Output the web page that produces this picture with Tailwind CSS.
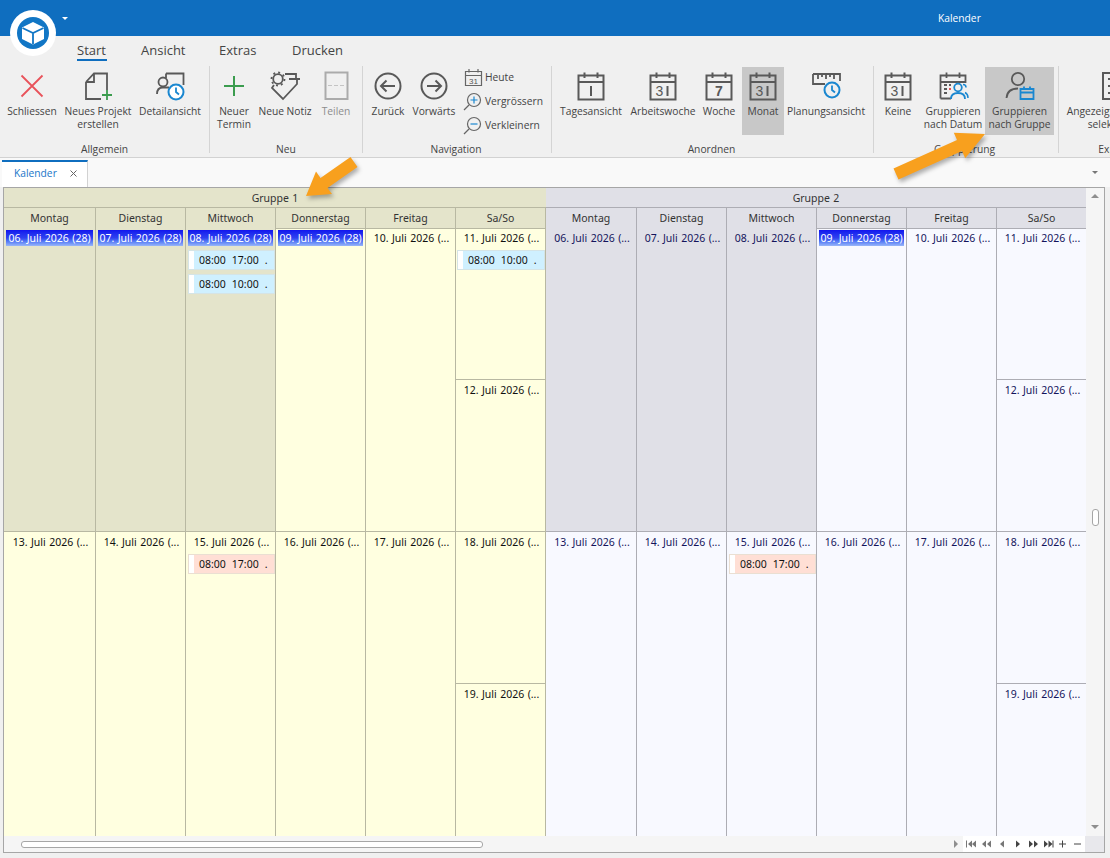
<!DOCTYPE html>
<html lang="de">
<head>
  <meta charset="UTF-8" />
  <title>Kalender</title>
  <script src="https://cdn.jsdelivr.net/npm/@tailwindcss/browser@4"></script>
</head>
<body class="bg-[#f0f0f0]">
<div class="relative w-[1110px] h-[858px] overflow-hidden bg-[#f0f0f0] font-['Open_Sans',sans-serif] text-[#444]">

  <svg class="hidden">
    <symbol id="cal" viewBox="0 0 32 32">
      <path d="M3.5 5.5H28.5V29.5H3.5ZM3.5 12H28.5M9.5 2.5V8M22.5 2.5V8" fill="none" stroke="#595959" stroke-width="2"/>
    </symbol>
    <symbol id="cal31" viewBox="0 0 32 32">
      <path d="M3.5 5.5H28.5V29.5H3.5ZM3.5 12H28.5M9.5 2.5V8M22.5 2.5V8M20.500 16V26" fill="none" stroke="#595959" stroke-width="2"/>
      <text x="12.500" y="26" text-anchor="middle" font-size="14" fill="#595959" font-family="Liberation Sans">3</text>
    </symbol>
  </svg>

  <!-- Titelleiste -->
  <div class="h-9 bg-[#0f6ebf] flex items-center text-white text-[10.25px] pt-px">
    <span class="ml-[938px]">Kalender</span>
  </div>

  <!-- Logo -->
  <div class="absolute left-[10px] top-[10px] w-[46px] h-[46px] rounded-full bg-white flex items-center justify-center">
    <svg width="32" height="32" viewBox="0 0 32 32">
      <circle cx="16" cy="16" r="16" fill="#1176c5"/>
      <path d="M16 5L27 10.500V22L16 27.500L5 22V10.500Z" fill="#fff"/>
      <path d="M5.500 11L16 16L26.500 11M16 16V27" fill="none" stroke="#1176c5" stroke-width="1.800"/>
    </svg>
  </div>
  <div class="absolute left-[62px] top-[17px] w-0 h-0 border-x-[3px] border-x-transparent border-t-[3px] border-t-white"></div>

  <!-- Ribbon Tabs -->
  <div class="h-[30px] flex text-[13px] leading-[28px] pl-[77px]">
    <div class="w-[64px]"><span class="inline-block w-[30px] h-[25px] border-b-[2px] border-[#0f6ebf] leading-[28px]">Start</span></div>
    <div class="w-[78px]">Ansicht</div>
    <div class="w-[73px]">Extras</div>
    <div>Drucken</div>
  </div>

  <!-- Ribbon -->
  <div class="h-[92px] flex text-[10.25px] leading-[13px] text-center border-b border-[#d2d2d2]">

    <div class="w-[210px] shrink-0 h-[87px] border-r border-[#d4d4d4] flex flex-col">
      <div class="h-[69px] shrink-0 pt-px pl-[4px] flex">
        <div class="w-[56px] flex flex-col items-center">
          <svg class="mt-[3px] mb-[3px]" width="32" height="32" viewBox="0 0 32 32"><path d="M5.5 5.5L26.5 26.5M26.5 5.5L5.5 26.5" stroke="#e8525a" stroke-width="1.8"/></svg>
          <span>Schliessen</span>
        </div>
        <div class="w-[76px] flex flex-col items-center">
          <svg class="mt-[3px] mb-[3px]" width="32" height="32" viewBox="0 0 32 32"><path d="M4 12L12 3.5H25V20M4 12H12V3.5M4 12V29H19" fill="none" stroke="#595959" stroke-width="1.8"/><path d="M25 20V30M20 25H30" stroke="#3b9c4e" stroke-width="1.8"/></svg>
          <span>Neues Projekt erstellen</span>
        </div>
        <div class="w-[68px] flex flex-col items-center">
          <svg class="mt-[3px] mb-[3px]" width="32" height="32" viewBox="0 0 32 32"><path d="M12 3.5H29.5V15M12 3.5V8" fill="none" stroke="#595959" stroke-width="1.8"/><circle cx="9" cy="12" r="4.5" fill="none" stroke="#595959" stroke-width="1.8"/><path d="M3 24C3 19 6 17.500 9 17.500H15" fill="none" stroke="#595959" stroke-width="1.8"/><circle cx="22" cy="22" r="7.500" fill="#fff" stroke="#1a87d0" stroke-width="2"/><path d="M22 17.500V22L25 24.500" fill="none" stroke="#1a87d0" stroke-width="1.8"/></svg>
          <span>Detailansicht</span>
        </div>
      </div>
      <div class="mt-[8px]">Allgemein</div>
    </div>

    <div class="w-[153px] shrink-0 h-[87px] border-r border-[#d4d4d4] flex flex-col">
      <div class="h-[69px] shrink-0 pt-px flex">
        <div class="w-[48px] flex flex-col items-center">
          <svg class="mt-[3px] mb-[3px]" width="32" height="32" viewBox="0 0 32 32"><path d="M16 6V26M6 16H26" stroke="#3b9c4e" stroke-width="2"/></svg>
          <span>Neuer Termin</span>
        </div>
        <div class="w-[54px] flex flex-col items-center">
          <svg class="mt-[3px] mb-[3px]" width="32" height="32" viewBox="0 0 32 32"><circle cx="9" cy="9" r="4.800" fill="none" stroke="#595959" stroke-width="1.800"/><circle cx="9" cy="9" r="6.500" fill="none" stroke="#595959" stroke-width="1.800" stroke-dasharray="2 3"/><path d="M5 15L3 18L14 29L28 14V9M16 4H27V9M20 9H31" fill="none" stroke="#595959" stroke-width="1.800"/></svg>
          <span class="whitespace-nowrap">Neue Notiz</span>
        </div>
        <div class="w-[48px] flex flex-col items-center text-[#8c8c8c]">
          <svg class="mt-[3px] mb-[3px]" width="32" height="32" viewBox="0 0 32 32"><path d="M5.500 2.500H27.500V29H5.500Z" fill="none" stroke="#ababab" stroke-width="2"/><path d="M8 15.500H25" stroke="#c4c4c4" stroke-dasharray="4 2"/></svg>
          <span>Teilen</span>
        </div>
      </div>
      <div class="mt-[8px]">Neu</div>
    </div>

    <div class="w-[189px] shrink-0 h-[87px] border-r border-[#d4d4d4] flex flex-col">
      <div class="h-[69px] shrink-0 pt-px pl-[2px] flex">
        <div class="w-[46px] flex flex-col items-center">
          <svg class="mt-[3px] mb-[3px]" width="32" height="32" viewBox="0 0 32 32"><circle cx="16" cy="16" r="12.500" fill="none" stroke="#595959" stroke-width="2"/><path d="M9.500 16H23M14.500 10.500L9 16L14.500 21.500" fill="none" stroke="#595959" stroke-width="2"/></svg>
          <span>Zurück</span>
        </div>
        <div class="w-[46px] flex flex-col items-center">
          <svg class="mt-[3px] mb-[3px]" width="32" height="32" viewBox="0 0 32 32"><circle cx="16" cy="16" r="12.500" fill="none" stroke="#595959" stroke-width="2"/><path d="M9 16H22.500M17.500 10.500L23 16L17.500 21.500" fill="none" stroke="#595959" stroke-width="2"/></svg>
          <span>Vorwärts</span>
        </div>
        <div class="ml-[6px] flex flex-col gap-1 text-left">
          <div class="h-5 flex items-center gap-[2px]">
            <svg width="20" height="20" viewBox="0 0 20 20"><path d="M2.500 4.500H18.500V18.500H2.500ZM2.500 8.500H18.500M6 2V5.500M15 2V5.500" fill="none" stroke="#666" stroke-width="1.200"/><text x="10.500" y="16.500" text-anchor="middle" font-size="8" fill="#555" font-family="Liberation Sans">31</text></svg>
            <span>Heute</span>
          </div>
          <div class="h-5 flex items-center gap-[2px]">
            <svg width="20" height="20" viewBox="0 0 20 20"><circle cx="11" cy="9" r="6.500" fill="none" stroke="#666" stroke-width="1.200"/><path d="M6 14L1 19" stroke="#666" stroke-width="1.200"/><path d="M11 5.500V12.500M7.500 9H14.500" stroke="#1a87d0" stroke-width="1.200"/></svg>
            <span>Vergrössern</span>
          </div>
          <div class="h-5 flex items-center gap-[2px]">
            <svg width="20" height="20" viewBox="0 0 20 20"><circle cx="11" cy="9" r="6.500" fill="none" stroke="#666" stroke-width="1.200"/><path d="M6 14L1 19" stroke="#666" stroke-width="1.200"/><path d="M7.500 9H14.500" stroke="#1a87d0" stroke-width="1.200"/></svg>
            <span>Verkleinern</span>
          </div>
        </div>
      </div>
      <div class="mt-[8px] pr-[2px]">Navigation</div>
    </div>

    <div class="w-[322px] shrink-0 h-[87px] border-r border-[#d4d4d4] flex flex-col">
      <div class="h-[69px] shrink-0 pt-px flex">
        <div class="w-[78px] flex flex-col items-center">
          <svg class="mt-[3px] mb-[3px]" width="32" height="32" viewBox="0 0 32 32"><use href="#cal"/><path d="M16 16V26" stroke="#595959" stroke-width="2"/></svg>
          <span>Tagesansicht</span>
        </div>
        <div class="w-[66px] flex flex-col items-center">
          <svg class="mt-[3px] mb-[3px]" width="32" height="32" viewBox="0 0 32 32"><use href="#cal31"/></svg>
          <span>Arbeitswoche</span>
        </div>
        <div class="w-[46px] flex flex-col items-center">
          <svg class="mt-[3px] mb-[3px]" width="32" height="32" viewBox="0 0 32 32"><use href="#cal"/><text x="16" y="26" text-anchor="middle" font-size="14" font-weight="bold" fill="#595959" font-family="Liberation Sans">7</text></svg>
          <span>Woche</span>
        </div>
        <div class="w-[42px] h-[68px] bg-[#c8c8c8] flex flex-col items-center">
          <svg class="mt-[3px] mb-[3px]" width="32" height="32" viewBox="0 0 32 32"><use href="#cal31"/></svg>
          <span>Monat</span>
        </div>
        <div class="w-[84px] flex flex-col items-center">
          <svg class="mt-[3px] mb-[3px]" width="32" height="32" viewBox="0 0 32 32"><path d="M3 4H30V11M3 4V14H15M8 4V9M12 4V7M16 4V9M20 4V7M24 4V9" fill="none" stroke="#595959" stroke-width="1.800"/><circle cx="22" cy="20" r="7.500" fill="#f0f0f0" stroke="#1a87d0" stroke-width="2"/><path d="M22 15.500V20L25 22.500" fill="none" stroke="#1a87d0" stroke-width="1.800"/></svg>
          <span class="whitespace-nowrap">Planungsansicht</span>
        </div>
      </div>
      <div class="mt-[8px] pr-[2px]">Anordnen</div>
    </div>

    <div class="w-[185px] shrink-0 h-[87px] border-r border-[#d4d4d4] flex flex-col">
      <div class="h-[69px] shrink-0 pt-px pl-px flex">
        <div class="w-[46px] flex flex-col items-center">
          <svg class="mt-[3px] mb-[3px]" width="32" height="32" viewBox="0 0 32 32"><use href="#cal31"/></svg>
          <span>Keine</span>
        </div>
        <div class="w-[64px] flex flex-col items-center">
          <svg class="mt-[3px] mb-[3px]" width="32" height="32" viewBox="0 0 32 32"><path d="M3.500 28.500V5.500H28.500V13M3.500 28.500H14M3.500 12H28.500M9.500 2.500V8M22.500 2.500V8" fill="none" stroke="#595959" stroke-width="1.800"/><path d="M7 15H10M7 19H10M7 23H10M12 15H14" stroke="#595959" stroke-width="2"/><path d="M12 19H14" stroke="#e8525a" stroke-width="2"/><circle cx="21" cy="17.500" r="3.800" fill="#f0f0f0" stroke="#1a87d0" stroke-width="1.800"/><path d="M14 29C14 24.500 17 23 21 23C25 23 28 24.500 28 29" fill="none" stroke="#1a87d0" stroke-width="1.800"/><path d="M26 14.500C28 14.500 29 16 29 17.500M28 22.500C30 23.500 31 25.500 31 28" fill="none" stroke="#1a87d0" stroke-width="1.500"/></svg>
          <span>Gruppieren nach Datum</span>
        </div>
        <div class="w-[69px] h-[68px] bg-[#c8c8c8] flex flex-col items-center">
          <svg class="mt-[3px] mb-[3px]" width="32" height="32" viewBox="0 0 32 32"><circle cx="14" cy="9" r="6.200" fill="none" stroke="#595959" stroke-width="1.800"/><path d="M2.500 28C3 22 7 18.500 14 18.500" fill="none" stroke="#595959" stroke-width="1.800"/><path d="M16.500 19H29.500V29H16.500ZM16.500 22.500H29.500M20 16.500V20M26 16.500V20" fill="none" stroke="#1a87d0" stroke-width="1.800"/></svg>
          <span>Gruppieren nach Gruppe</span>
        </div>
      </div>
      <div class="mt-[8px] pr-[3px]">Gruppierung</div>
    </div>

    <div class="w-[112px] shrink-0 h-[87px] flex flex-col">
      <div class="h-[69px] shrink-0 pt-px pl-[5px] flex">
        <div class="w-[100px] shrink-0 flex flex-col items-center">
          <svg class="mt-[3px] mb-[3px]" width="32" height="32" viewBox="0 0 32 32"><path d="M5 3H27V29H5ZM10 9H13M10 16H13M10 23H13" fill="none" stroke="#595959" stroke-width="2"/></svg>
          <span class="whitespace-nowrap">Angezeigte Termine</span>
          <span>selektieren</span>
        </div>
      </div>
      <div class="mt-[8px] pl-[5px] w-[105px]">Export</div>
    </div>
  </div>

  <!-- Dokument-Tab -->
  <div class="h-[29px] bg-[#f9f9f9] flex justify-between">
    <div class="ml-[2px] mt-[2px] w-[86px] h-[27px] pb-[2px] bg-white border-t-2 border-t-[#0f6ebf] border-r border-r-[#d2d2d2] flex items-center text-[10.25px] text-[#1a76c9]">
      <span class="ml-[12px]">Kalender</span>
      <svg class="ml-[13px]" width="7" height="7" viewBox="0 0 7 7"><path d="M0.500 0.500L6.500 6.500M6.500 0.500L0.500 6.500" stroke="#666"/></svg>
    </div>
    <div class="mr-[12px] mt-[13px] w-0 h-0 border-x-[3px] border-x-transparent border-t-[3px] border-t-[#777]"></div>
  </div>

  <!-- Kalender -->
  <div class="ml-[3px] w-[1102px] h-[666px] border border-[#a6a6a6] bg-[#f5f5f5] font-['Noto_Sans',sans-serif] text-[10.5px] leading-[14px] text-center [word-spacing:0.7px]">
    <div class="flex h-[648px]">

      <!-- Gruppe 1 -->
      <div class="w-[542px] shrink-0 bg-[#ffffe0] text-[#111]">
        <div class="h-5 bg-[#e4e4cb] border-b border-[#b8b8a2] flex items-center justify-center text-[#333]">Gruppe 1</div>
        <div class="grid grid-cols-[92px_90px_90px_90px_90px_90px] h-5 bg-[#e4e4cb] text-[#333]">
          <div class="border-r border-b border-[#b8b8a2] leading-5">Montag</div>
          <div class="border-r border-b border-[#b8b8a2] leading-5">Dienstag</div>
          <div class="border-r border-b border-[#b8b8a2] leading-5">Mittwoch</div>
          <div class="border-r border-b border-[#b8b8a2] leading-5">Donnerstag</div>
          <div class="border-r border-b border-[#b8b8a2] leading-5">Freitag</div>
          <div class="border-r border-b border-[#b8b8a2] leading-5">Sa/So</div>
        </div>
        <div class="grid grid-cols-[92px_90px_90px_90px_90px_90px] h-[304px]">
          <div class="border-r border-b border-[#b8b8a2] bg-[#e4e4cb] pt-[2px]"><div class="mx-[2px] h-4 leading-4 whitespace-nowrap text-white bg-gradient-to-b from-[#1212ee] via-[#3040f0] to-[#9ab6f8]">06. Juli 2026 (28)</div></div>
          <div class="border-r border-b border-[#b8b8a2] bg-[#e4e4cb] pt-[2px]"><div class="mx-[2px] h-4 leading-4 whitespace-nowrap text-white bg-gradient-to-b from-[#1212ee] via-[#3040f0] to-[#9ab6f8]">07. Juli 2026 (28)</div></div>
          <div class="border-r border-b border-[#b8b8a2] bg-[#e4e4cb] pt-[2px]">
            <div class="mx-[2px] h-4 leading-4 whitespace-nowrap text-white bg-gradient-to-b from-[#1212ee] via-[#3040f0] to-[#9ab6f8]">08. Juli 2026 (28)</div>
            <div class="mt-1 ml-[2px] h-5 flex bg-[#cff0ff] border border-[#d5e4e6] items-center">
              <div class="w-[5px] h-full bg-white"></div><div class="flex gap-[6px] pl-[5px]"><span>08:00</span><span>17:00</span><span>.</span></div>
            </div>
            <div class="mt-1 ml-[2px] h-5 flex bg-[#cff0ff] border border-[#d5e4e6] items-center">
              <div class="w-[5px] h-full bg-white"></div><div class="flex gap-[6px] pl-[5px]"><span>08:00</span><span>10:00</span><span>.</span></div>
            </div>
          </div>
          <div class="border-r border-b border-[#b8b8a2] pt-[2px]"><div class="mx-[2px] h-4 leading-4 whitespace-nowrap text-white bg-gradient-to-b from-[#1212ee] via-[#3040f0] to-[#9ab6f8]">09. Juli 2026 (28)</div></div>
          <div class="border-r border-b border-[#b8b8a2] pt-[2px] pl-[2px] leading-4">10. Juli 2026 (...</div>
          <div class="border-r border-b border-[#b8b8a2] flex flex-col">
            <div class="h-[152px] border-b border-[#b8b8a2] pt-[2px]">
              <div class="pl-[2px] leading-4">11. Juli 2026 (...</div>
              <div class="mt-1 ml-px h-5 flex bg-[#cff0ff] border border-[#d5e4e6] items-center">
                <div class="w-[5px] h-full bg-white"></div><div class="flex gap-[6px] pl-[5px]"><span>08:00</span><span>10:00</span><span>.</span></div>
              </div>
            </div>
            <div class="pt-[2px] pl-[2px] leading-4">12. Juli 2026 (...</div>
          </div>
        </div>
        <div class="grid grid-cols-[92px_90px_90px_90px_90px_90px] h-[304px]">
          <div class="border-r border-[#b8b8a2] pt-[2px] pl-[2px] leading-4">13. Juli 2026 (...</div>
          <div class="border-r border-[#b8b8a2] pt-[2px] pl-[2px] leading-4">14. Juli 2026 (...</div>
          <div class="border-r border-[#b8b8a2] pt-[2px]">
            <div class="pl-[2px] leading-4">15. Juli 2026 (...</div>
            <div class="mt-1 ml-[2px] h-5 flex bg-[#ffdfd5] border border-[#eadfd2] items-center">
              <div class="w-[5px] h-full bg-white"></div><div class="flex gap-[6px] pl-[5px]"><span>08:00</span><span>17:00</span><span>.</span></div>
            </div>
          </div>
          <div class="border-r border-[#b8b8a2] pt-[2px] pl-[2px] leading-4">16. Juli 2026 (...</div>
          <div class="border-r border-[#b8b8a2] pt-[2px] pl-[2px] leading-4">17. Juli 2026 (...</div>
          <div class="border-r border-[#b8b8a2] flex flex-col">
            <div class="h-[152px] border-b border-[#b8b8a2] pt-[2px] pl-[2px] leading-4">18. Juli 2026 (...</div>
            <div class="pt-[2px] pl-[2px] leading-4">19. Juli 2026 (...</div>
          </div>
        </div>
      </div>

      <!-- Gruppe 2 -->
      <div class="w-[540px] shrink-0 bg-[#f8f9ff] text-[#14145c]">
        <div class="h-5 bg-[#e0e0e7] border-b border-[#adadb4] flex items-center justify-center text-[#333]">Gruppe 2</div>
        <div class="grid grid-cols-[91px_90px_90px_90px_90px_89px] h-5 bg-[#e0e0e7] text-[#333]">
          <div class="border-r border-b border-[#adadb4] leading-5">Montag</div>
          <div class="border-r border-b border-[#adadb4] leading-5">Dienstag</div>
          <div class="border-r border-b border-[#adadb4] leading-5">Mittwoch</div>
          <div class="border-r border-b border-[#adadb4] leading-5">Donnerstag</div>
          <div class="border-r border-b border-[#adadb4] leading-5">Freitag</div>
          <div class="border-b border-[#adadb4] leading-5">Sa/So</div>
        </div>
        <div class="grid grid-cols-[91px_90px_90px_90px_90px_89px] h-[304px]">
          <div class="border-r border-b border-[#adadb4] bg-[#e0e0e7] pt-[2px] pl-[2px] leading-4">06. Juli 2026 (...</div>
          <div class="border-r border-b border-[#adadb4] bg-[#e0e0e7] pt-[2px] pl-[2px] leading-4">07. Juli 2026 (...</div>
          <div class="border-r border-b border-[#adadb4] bg-[#e0e0e7] pt-[2px] pl-[2px] leading-4">08. Juli 2026 (...</div>
          <div class="border-r border-b border-[#adadb4] pt-[2px]"><div class="mx-[2px] h-4 leading-4 whitespace-nowrap text-white bg-gradient-to-b from-[#1212ee] via-[#3040f0] to-[#9ab6f8]">09. Juli 2026 (28)</div></div>
          <div class="border-r border-b border-[#adadb4] pt-[2px] pl-[2px] leading-4">10. Juli 2026 (...</div>
          <div class="border-b border-[#adadb4] flex flex-col">
            <div class="h-[152px] border-b border-[#adadb4] pt-[2px] pl-[2px] leading-4">11. Juli 2026 (...</div>
            <div class="pt-[2px] pl-[2px] leading-4">12. Juli 2026 (...</div>
          </div>
        </div>
        <div class="grid grid-cols-[91px_90px_90px_90px_90px_89px] h-[304px]">
          <div class="border-r border-[#adadb4] pt-[2px] pl-[2px] leading-4">13. Juli 2026 (...</div>
          <div class="border-r border-[#adadb4] pt-[2px] pl-[2px] leading-4">14. Juli 2026 (...</div>
          <div class="border-r border-[#adadb4] pt-[2px]">
            <div class="pl-[2px] leading-4">15. Juli 2026 (...</div>
            <div class="mt-1 ml-[2px] h-5 flex bg-[#ffdfd5] border border-[#eadfd2] items-center text-[#111]">
              <div class="w-[5px] h-full bg-white"></div><div class="flex gap-[6px] pl-[5px]"><span>08:00</span><span>17:00</span><span>.</span></div>
            </div>
          </div>
          <div class="border-r border-[#adadb4] pt-[2px] pl-[2px] leading-4">16. Juli 2026 (...</div>
          <div class="border-r border-[#adadb4] pt-[2px] pl-[2px] leading-4">17. Juli 2026 (...</div>
          <div class="flex flex-col">
            <div class="h-[152px] border-b border-[#adadb4] pt-[2px] pl-[2px] leading-4">18. Juli 2026 (...</div>
            <div class="pt-[2px] pl-[2px] leading-4">19. Juli 2026 (...</div>
          </div>
        </div>
      </div>

      <!-- vertikale Scrollbar -->
      <div class="w-[18px] shrink-0 flex flex-col items-center bg-[#f5f5f5]">
        <div class="mt-[6px] w-0 h-0 border-x-[4px] border-x-transparent border-b-[4px] border-b-[#8e8e8e]"></div>
        <div class="mt-[311px] w-[7px] h-[17px] bg-white border border-[#a6a6a6] rounded-[3px]"></div>
        <div class="mt-[299px] w-0 h-0 border-x-[4px] border-x-transparent border-t-[4px] border-t-[#8e8e8e]"></div>
      </div>
    </div>

    <!-- horizontale Scrollbar und Navigation -->
    <div class="flex h-4 items-center">
      <div class="w-[959px] h-full flex items-center relative">
        <div class="ml-[5px] w-0 h-0 border-y-[4px] border-y-transparent border-r-[4px] border-r-[#f5f5f5]"></div>
        <div class="ml-2 w-[462px] h-[7px] bg-white border border-[#a6a6a6] rounded-[3px]"></div>
        <div class="ml-auto mr-[5px] w-0 h-0 border-y-[4px] border-y-transparent border-l-[4px] border-l-[#8e8e8e]"></div>
      </div>
      <div class="w-[122px] h-full bg-white">
        <svg width="122" height="16" viewBox="0 0 122 16" fill="#444">
          <path d="M3 4.500H4V11.500H3ZM9 4.500V11.500L5 8ZM13 4.500V11.500L9 8Z" fill="#777"/>
          <path d="M23 4.500V11.500L19 8ZM28 4.500V11.500L24 8Z" fill="#777"/>
          <path d="M41 4.500V11.500L37 8Z" fill="#777"/>
          <path d="M53 4.500V11.500L57 8Z"/>
          <path d="M66 4.500V11.500L70 8ZM71 4.500V11.500L75 8Z"/>
          <path d="M81 4.500V11.500L85 8ZM85.500 4.500V11.500L89.500 8ZM89.500 4.500H90.500V11.500H89.500Z"/>
          <path d="M96 8H103M99.500 4.500V11.500M111 8H118" stroke="#444" fill="none"/>
        </svg>
      </div>
      <div class="flex-1 h-full bg-[#e8e8ec]"></div>
    </div>
  </div>

  <!-- Pfeile -->
  <svg class="absolute left-0 top-0 pointer-events-none drop-shadow-[2px_3px_2px_rgba(0,0,0,0.3)]" width="1110" height="858" viewBox="0 0 1110 858">
    <polygon points="350.500,157 357.500,167 327.500,188 332,194 306,196 316,171.600 320.500,178" fill="#f8a01e"/>
    <polygon points="893.500,168.500 898.500,179.500 962,151 965.200,158.300 985,134 953.800,132.700 957,140" fill="#f8a01e"/>
  </svg>
</div>
</body>
</html>
